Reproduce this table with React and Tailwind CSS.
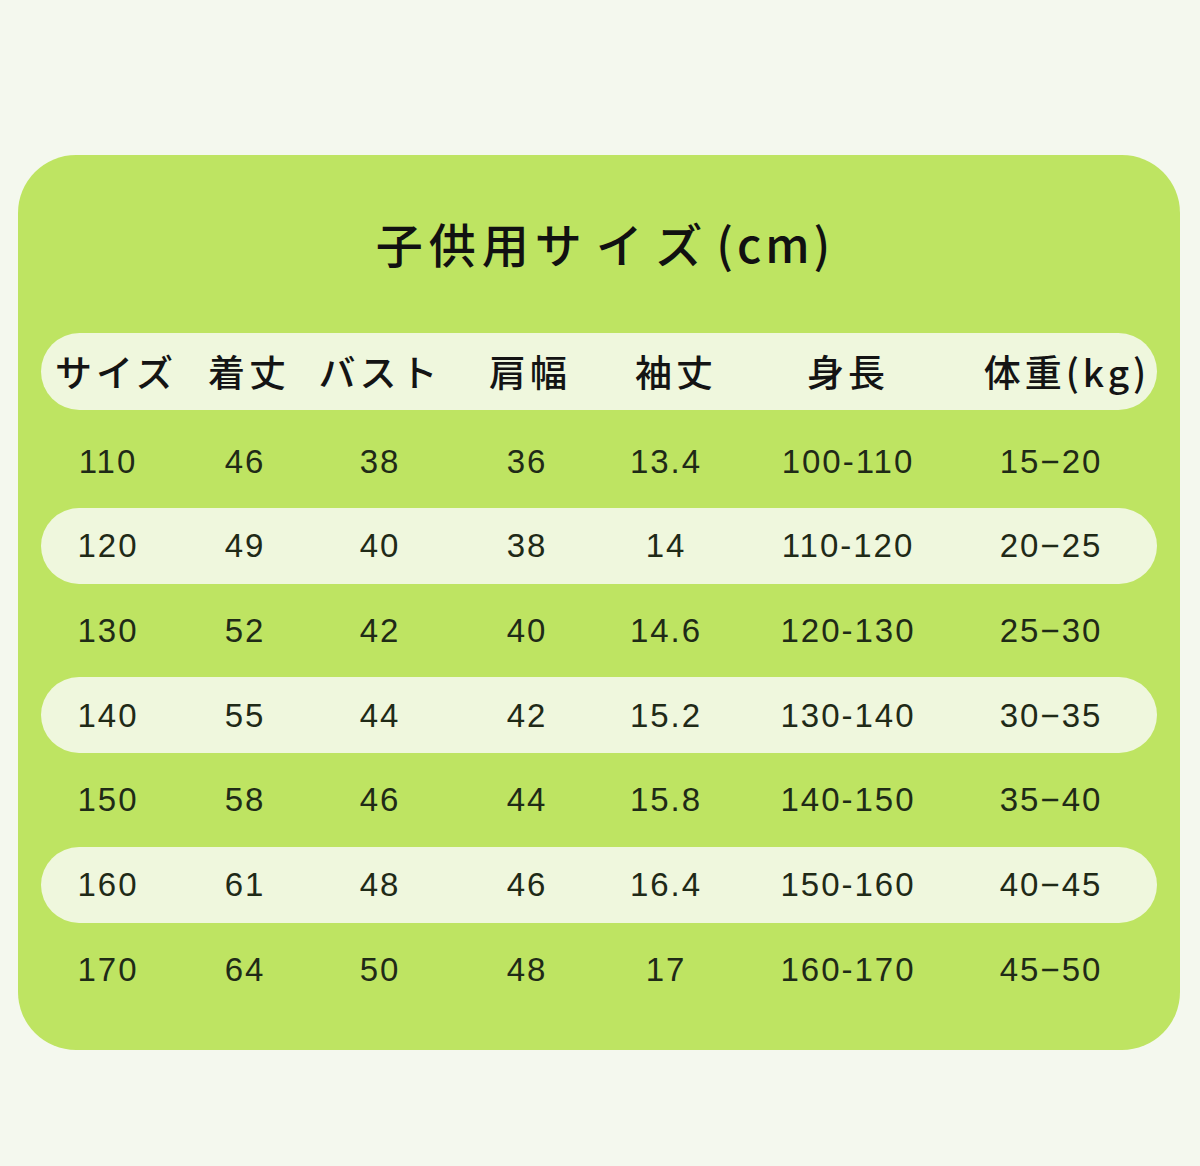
import React from 'react'

const heads = ["サイズ", "着丈", "バスト", "肩幅", "袖丈", "身長", "体重(kg)"]
const headPad = ["pl-[14px]", "pl-[8px]", "", "pl-[6px]", "pl-[20px]", "", "pl-[4px]"]
const numPad = ["", "", "", "", "", "", "pr-[28px]"]

const rows = [
  ["110", "46", "38", "36", "13.4", "100-110", "15−20"],
  ["120", "49", "40", "38", "14", "110-120", "20−25"],
  ["130", "52", "42", "40", "14.6", "120-130", "25−30"],
  ["140", "55", "44", "42", "15.2", "130-140", "30−35"],
  ["150", "58", "46", "44", "15.8", "140-150", "35−40"],
  ["160", "61", "48", "46", "16.4", "150-160", "40−45"],
  ["170", "64", "50", "48", "17", "160-170", "45−50"],
]

const cols = "grid grid-cols-[134px_140px_130px_164px_114px_250px_184px] items-center w-full"

const App = () => {
  return (
    <div className="min-h-[1166px] w-[1200px] bg-[#f4f8ee] pt-[155px]" style={{ fontFamily: '"Noto Sans CJK JP", "Liberation Sans", sans-serif' }}>
      <div className="ml-[18px] w-[1162px] h-[895px] bg-[#bee462] rounded-[58px] px-[23px] pt-[58px]">
        <h1 className="h-[60px] leading-[60px] text-center text-[47px] font-medium text-[#111] pl-[12px]">
          <span className="tracking-[6px]">子供用</span>
          <span className="tracking-[14px]">サイズ</span>
          <span className="tracking-[4px]">(cm)</span>
        </h1>

        <div className="mt-[60px] h-[77px] rounded-full bg-[#eff7dd] flex items-center">
          <div className={cols}>
            {heads.map((h, i) => (
              <div key={i} className={"text-center text-[37px] font-medium text-[#141414] tracking-[4px] whitespace-nowrap " + headPad[i]}>
                {h}
              </div>
            ))}
          </div>
        </div>

        <div className="mt-[9px]">
          {rows.map((r, idx) => (
            <div key={idx} className="h-[84.67px] flex items-center">
              <div className={"h-[76px] w-full rounded-full flex items-center " + (idx % 2 === 1 ? "bg-[#eff7dd]" : "")}>
                <div className={cols}>
                  {r.map((v, i) => (
                    <div key={i} className={"text-center text-[33px] text-[#1f2a17] tracking-[2px] whitespace-nowrap " + numPad[i]} style={{ fontFamily: '"Liberation Sans", sans-serif' }}>
                      {v}
                    </div>
                  ))}
                </div>
              </div>
            </div>
          ))}
        </div>
      </div>
    </div>
  )
}

export default App
